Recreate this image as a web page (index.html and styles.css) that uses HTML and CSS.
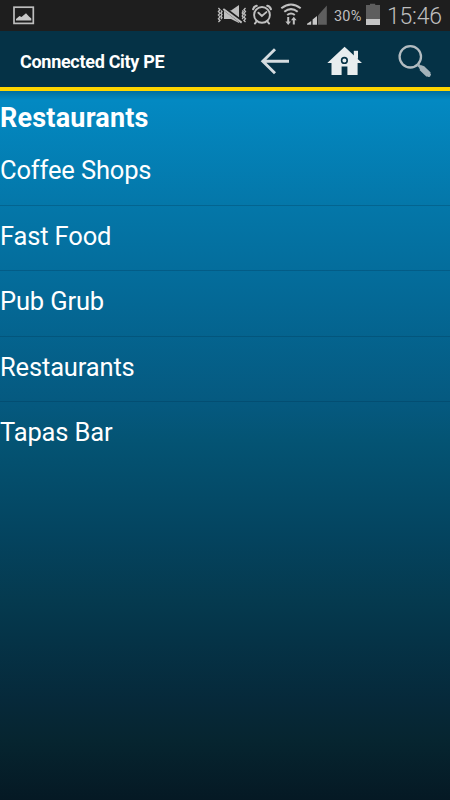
FILE: index.html
```html
<!DOCTYPE html>
<html lang="en">
    <head>
        <meta charset="UTF-8">
        <meta name="viewport" content="width=device-width, initial-scale=1.0">
        <title>Connected City PE</title>
        <link rel="stylesheet" href="styles.css">
    </head>
    <body>
        <div class="statusBar">
            <svg class="picture" width="22" height="20" viewBox="0 0 22 20">
                <rect x="1" y="1.2" width="19.3" height="16.2" fill="none" stroke="#bebebe" stroke-width="1.7"/>
                <path d="M3 14.6V13L6.5 10L8.5 11L13 7.2L16 10.5L18.3 12.5V14.6Z" fill="#c8c8c8"/>
            </svg>
            <svg class="mute" width="32" height="31" viewBox="216 0 32 31">
                <g fill="none" stroke="#bebebe" stroke-width="1.3">
                    <path d="M218.4 8l1.6 1.7-1.6 1.8 1.6 1.8-1.6 1.8 1.6 1.8-1.6 1.8 1.6 1.8-1.6 1.5M221 10.5l1 1.1-1 1.5 1 1.5-1 1.5 1 1.5-1 1.5M242.2 10.5l1 1.1-1 1.5 1 1.5-1 1.5 1 1.5-1 1.5M245.5 8l-1.6 1.7 1.6 1.8-1.6 1.8 1.6 1.8-1.6 1.8 1.6 1.8-1.6 1.8 1.6 1.5"/>
                </g>
                <path d="M224 10.5H231L239 5V23L231 19H224Z" fill="#bebebe"/>
                <path d="M223.5 7.9L242 21.9" stroke="#1e1e1e" stroke-width="3.8"/>
                <path d="M223.3 9L241.7 22.6" stroke="#bebebe" stroke-width="2"/>
            </svg>
            <svg class="alarm" width="24" height="31" viewBox="250 0 24 31">
                <g fill="none" stroke="#c0c0c0" stroke-width="1.9" stroke-linecap="round">
                    <circle cx="262" cy="14.9" r="7.9"/>
                    <path d="M258.4 12.7l3.5 3.3 4.5-3.9M256.7 21.2l-1.8 2.4M267.3 21.2l1.8 2.4"/>
                    <path d="M253.1 9.2q.7-2.7 3.6-3.4M270.9 9.2q-.7-2.7-3.6-3.4" stroke-width="2.2"/>
                </g>
            </svg>
            <svg class="wifi" width="24" height="31" viewBox="279 0 24 31">
                <g fill="none" stroke="#c0c0c0" stroke-width="2">
                    <path d="M281.3 8.3q9.7-7.7 19.4 0M284.3 11.8q6.7-5.3 13.4 0M287.2 15q3.8-3 7.6 0"/>
                </g>
                <path d="M287.2 17h2v4.5h1.8l-2.8 3.5-2.8-3.5h1.8zM292.8 24.5h2v-4.2h1.8l-2.8-3.5-2.8 3.5h1.8z" fill="#c0c0c0"/>
            </svg>
            <svg class="signal" width="22" height="31" viewBox="306 0 22 31">
                <path d="M307 24.7v-1l4.2-2.8v3.8zM312.6 24.7v-5.1l4.4-3.6v8.7z" fill="#c8c8c8"/>
                <path d="M318 24.7v-9.3l8.8-9.9v19.2z" fill="#5e5e5e"/>
            </svg>
            <span class="percent">30%</span>
            <svg class="battery" width="16" height="31" viewBox="365 0 16 31">
                <path d="M366 5h4V3.8h5.2V5h4.8v14h-14z" fill="#5e5e5e"/>
                <path d="M366 19h14v6h-14z" fill="#c4c4c4"/>
            </svg>
            <span class="clock">15:46</span>
        </div>

        <div class="header">
            <h1>Connected City PE</h1>
            <svg class="back" width="30" height="30" viewBox="260 46 30 30">
                <path d="M275 49.2L262.8 61.2L275 73.2M263 61.3H289" fill="none" stroke="#d5dce0" stroke-width="2.9"/>
            </svg>
            <svg class="home" width="36" height="30" viewBox="327 46 36 30">
                <path d="M353.8 50.8h4.2v8h-4.2z" fill="#e8edef"/>
                <path d="M344.6 46.8L362 63H357.6V75H347.4V66.5H341.6V75H331.5V63H327.3Z" fill="#e8edef"/>
                <circle cx="344.4" cy="60.4" r="2.8" fill="#e8edef" stroke="#053246" stroke-width="1.6"/>
            </svg>
            <svg class="search" width="36" height="36" viewBox="397 43 36 36">
                <circle cx="410.3" cy="56.8" r="10.7" fill="none" stroke="#b3bcc1" stroke-width="2.3"/>
                <path d="M417.7 64.5L422 68.5" stroke="#a4b2b9" stroke-width="3"/>
                <path d="M421.6 67.8L428.6 74.6" stroke="#a4b2b9" stroke-width="6"/>
                <path d="M421.6 67.8L428.6 74.6" stroke="#a4b2b9" stroke-width="4.6" stroke-linecap="round"/>
            </svg>
        </div>

        <div class="content">
            <h2>Restaurants</h2>
            <ul class="categories">
                <li>Coffee Shops</li>
                <li>Fast Food</li>
                <li>Pub Grub</li>
                <li>Restaurants</li>
                <li>Tapas Bar</li>
            </ul>
        </div>
    </body>
</html>
```
FILE: styles.css
```css
body{
    margin: 0;
    height: 800px;
    display: flex;
    flex-direction: column;
    overflow: hidden;
    background-color: #051924;
    font-family: Roboto, "Liberation Sans", sans-serif;
    color: white;
}

svg{
    display: block;
    flex: none;
}

.statusBar{
    display: flex;
    align-items: center;
    height: 31px;
    box-sizing: border-box;
    padding-left: 13px;
    background-color: #1e1e1e;
    color: #bebebe;
    white-space: nowrap;
}

.mute{
    margin-left: 181px;
}

.alarm{
    margin-left: 2px;
}

.wifi{
    margin-left: 5px;
}

.signal{
    margin-left: 3px;
}

.percent{
    width: 31px;
    margin-left: 6px;
    padding-top: 2px;
    font-size: 14.5px;
    line-height: 29px;
    letter-spacing: 0.2px;
}

.battery{
    margin-right: 6px;
}

.clock{
    padding-top: 2px;
    font-size: 23px;
    line-height: 29px;
    font-weight: 300;
    letter-spacing: -0.2px;
}

.header{
    display: flex;
    align-items: center;
    height: 60px;
    box-sizing: border-box;
    padding-left: 20px;
    background-color: #053246;
    border-bottom: 4px solid #ffd500;
}

.header h1{
    margin: 0;
    width: 240px;
    font-size: 18px;
    line-height: 50px;
    font-weight: bold;
    letter-spacing: -0.3px;
    padding-top: 6px;
}

.back, .home{
    margin-top: 4px;
}

.home{
    margin-left: 37px;
}

.search{
    margin-top: 4px;
    margin-left: 34px;
}

.content{
    flex: 1;
    background: linear-gradient(rgba(0,50,75,0.3), rgba(0,50,75,0) 9px),
                linear-gradient(#0389c2 0, #0389c2 10px, #0477a9 114px, #046895 214px, #05597f 314px, #045474 349px, #04435e 449px, #053a4f 509px, #053347 549px, #06293a 609px, #062530 649px, #051924 100%);
}

.content h2{
    margin: 0;
    padding-top: 9px;
    padding-bottom: 3.6px;
    font-size: 27px;
    line-height: 37px;
    font-weight: bold;
    letter-spacing: 0.2px;
}

.categories{
    margin: 0;
    padding: 0;
    list-style: none;
}

.categories li{
    height: 65.4px;
    box-sizing: border-box;
    padding-top: 11.8px;
    font-size: 25.5px;
    line-height: 36px;
    letter-spacing: -0.15px;
    border-bottom: 1px solid rgba(0,45,70,0.25);
}

.categories li:last-child{
    border-bottom: none;
}
```
